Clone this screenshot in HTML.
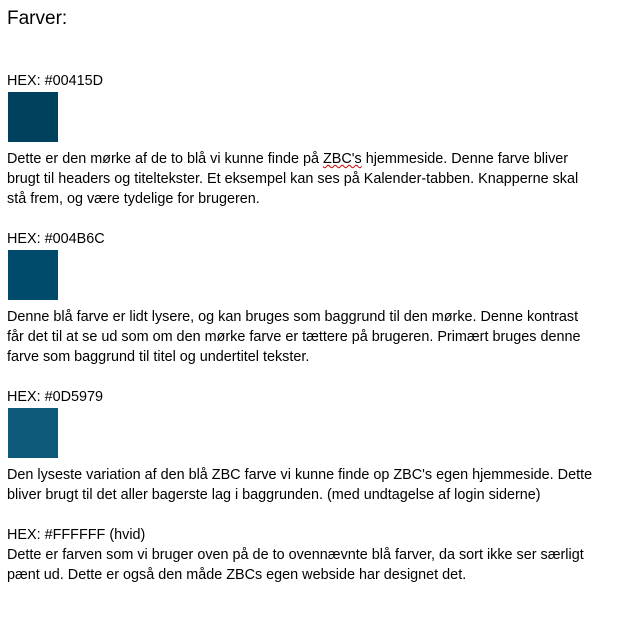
<!DOCTYPE html>
<html><head><meta charset="utf-8"><style>
body{margin:0;width:643px;height:633px;background:#fff;font-family:"Liberation Sans",Arial,sans-serif;color:#000;position:relative;overflow:hidden}
.t{position:absolute;left:7px;font-size:14.4px;line-height:20px;white-space:nowrap}
.sq{position:absolute;left:8px;width:50px;height:50px}
h1{position:absolute;left:7px;top:7px;margin:0;font-weight:normal;font-size:19px;line-height:24px}
u{text-decoration:underline wavy #c00;text-decoration-thickness:1px}
</style></head><body>
<h1>Farver:</h1>
<div class="t" style="top:71px">HEX: #00415D</div>
<div class="sq" style="top:92px;background:#00415D"></div>
<div class="t" style="top:149px">Dette er den mørke af de to blå vi kunne finde på <u>ZBC's</u> hjemmeside. Denne farve bliver<br>brugt til headers og titeltekster. Et eksempel kan ses på Kalender-tabben. Knapperne skal<br>stå frem, og være tydelige for brugeren.</div>
<div class="t" style="top:229px">HEX: #004B6C</div>
<div class="sq" style="top:250px;background:#004B6C"></div>
<div class="t" style="top:307px">Denne blå farve er lidt lysere, og kan bruges som baggrund til den mørke. Denne kontrast<br>får det til at se ud som om den mørke farve er tættere på brugeren. Primært bruges denne<br>farve som baggrund til titel og undertitel tekster.</div>
<div class="t" style="top:387px">HEX: #0D5979</div>
<div class="sq" style="top:408px;background:#0D5979"></div>
<div class="t" style="top:465px">Den lyseste variation af den blå ZBC farve vi kunne finde op ZBC's egen hjemmeside. Dette<br>bliver brugt til det aller bagerste lag i baggrunden. (med undtagelse af login siderne)</div>
<div class="t" style="top:525px">HEX: #FFFFFF (hvid)<br>Dette er farven som vi bruger oven på de to ovennævnte blå farver, da sort ikke ser særligt<br>pænt ud. Dette er også den måde ZBCs egen webside har designet det.</div>
</body></html>
